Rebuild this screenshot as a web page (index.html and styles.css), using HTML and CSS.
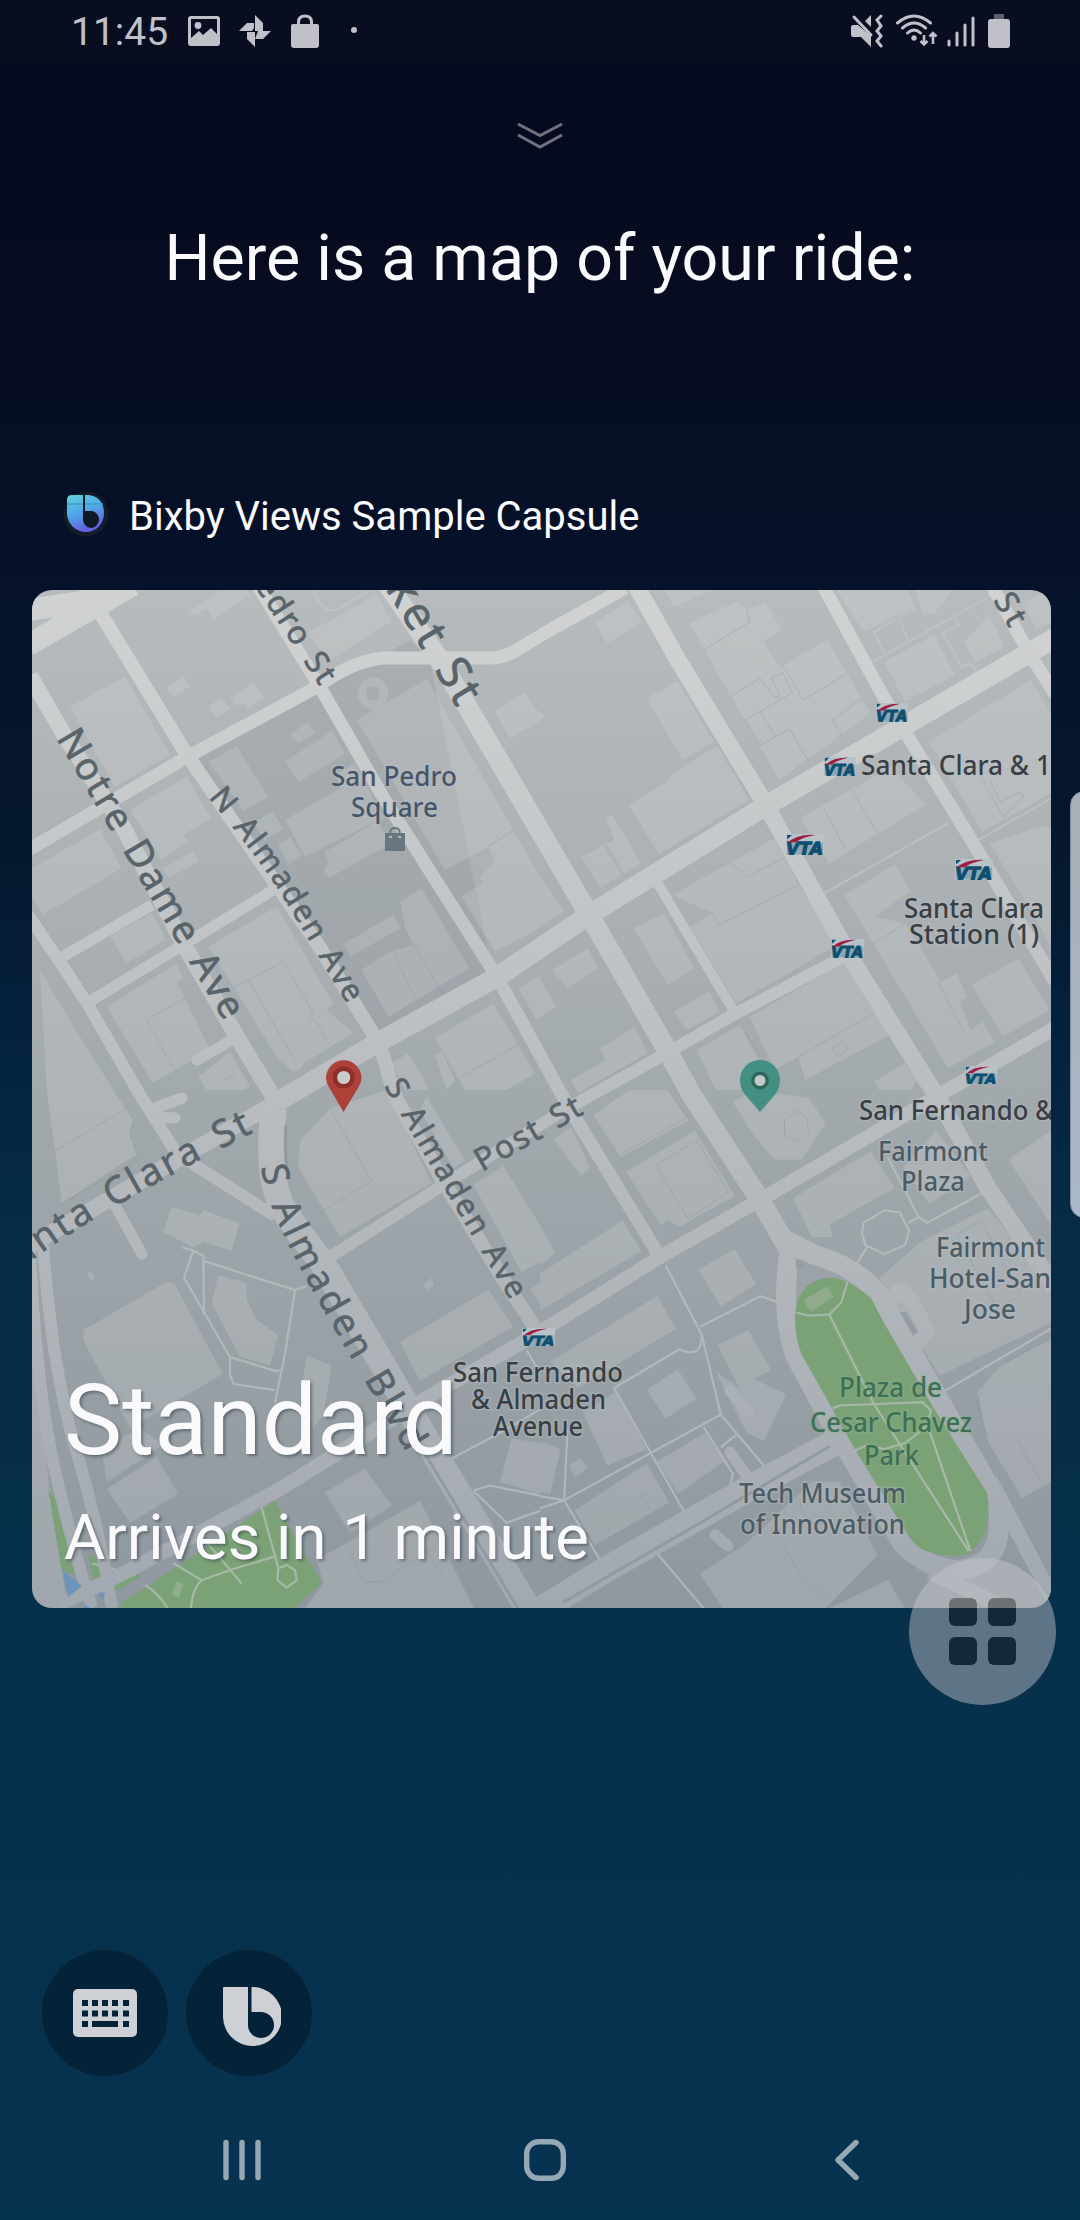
FILE: index.html
```html
<!DOCTYPE html>
<html lang="en">
<head>
<meta charset="utf-8">
<title>Map of your ride</title>
<link rel="stylesheet" href="styles.css">
</head>
<body>
<main class="screen">
  <header class="status">
    <div class="status-left">
      <span class="clock">11:45</span>
      <svg class="ico-image" width="32" height="30" viewBox="0 0 32 30"><path fill-rule="evenodd" d="M3 0H29Q32 0 32 3V27Q32 30 29 30H3Q0 30 0 27V3Q0 0 3 0ZM3 3V22L11 15L15 19L23 12L29 18V3Z"/><circle cx="10" cy="9.5" r="3.4"/></svg>
      <svg class="ico-fan" width="32" height="34" viewBox="0 0 32 34"><path d="M16 1L24 9V17H16ZM32 17L24 25H16L19 17ZM16 33L8 25V18H16ZM0 17L8 9H15V14L13 17Z"/></svg>
      <svg class="ico-bag" width="28" height="34" viewBox="0 0 28 34"><path d="M2 10H26Q28 10 28 12V31Q28 34 25 34H3Q0 34 0 31V12Q0 10 2 10Z"/><path class="line3" d="M7.500 12V8Q7.500 2 14 2Q20.500 2 20.500 8V12"/></svg>
      <span class="dot"></span>
    </div>
    <div class="status-right">
      <svg width="32" height="34" viewBox="0 0 32 34"><path d="M2 11H7L20 22V33L10 23H2Q0 23 0 21V13Q0 11 2 11ZM20 1V13L14 7Z"/><path class="line3" d="M3 3L20 21"/><path class="line3" d="M30 2L26 6L30 12L26 17L30 22L26 27L30 32"/></svg>
      <svg class="ico-wifi" width="42" height="34" viewBox="0 0 42 34"><path class="line3" d="M1.500 9Q18 -5 34.500 9M6.500 14Q18 4 29.500 14M11.500 19Q18 13 24.500 19"/><circle cx="18" cy="24" r="2.700"/><path class="line2" d="M28 21V30M24.500 27L28 30.500L31.500 27M37 30V19M33.500 22.500L37 19L40.500 22.500"/></svg>
      <svg class="ico-signal" width="28" height="34" viewBox="0 0 28 34"><path class="line3" d="M2 27V31M10 19V31M18 11V31M26 4V31"/></svg>
      <svg class="ico-battery" width="22" height="34" viewBox="0 0 22 34"><path opacity=".45" d="M6 0H16V6H6Z"/><rect y="5" width="22" height="29" rx="3"/></svg>
    </div>
  </header>

  <svg class="chevrons" width="48" height="30" viewBox="0 0 48 30"><path d="M2 3L24 14.500L46 3M2 14L24 26L46 14"/></svg>
  <h1 class="title">Here is a map of your ride:</h1>

  <div class="capsule">
    <svg width="46" height="46" viewBox="0 0 46 46">
      <defs><linearGradient id="bx" x1="0" y1="0" x2=".35" y2="1"><stop offset="0" stop-color="#5fd3d6"/><stop offset=".5" stop-color="#4fa9ea"/><stop offset="1" stop-color="#6260dc"/></linearGradient></defs>
      <circle cx="23" cy="23" r="22.500" fill="#141c2a"/>
      <path fill="url(#bx)" d="M9 4H24C35 4 41 12 41 22C41 33 33 41 23 41C13 41 4 33 4 22V9Q4 4 9 4Z"/>
      <path d="M4 13H40" stroke="#3b9fc0" stroke-width="1.500"/>
      <path fill="#101827" d="M20 4H22V20H29A8 8.500 0 1 1 20 28Z"/>
    </svg>
    <span class="capsule-name">Bixby Views Sample Capsule</span>
  </div>

  <section class="card">
    <svg class="map" width="1019" height="1018" viewBox="32 590 1019 1018">
      <defs>
        <linearGradient id="land" gradientUnits="userSpaceOnUse" x1="0" y1="590" x2="0" y2="1608"><stop offset="0" stop-color="#b7bbbd"/><stop offset=".5" stop-color="#a2a9ad"/><stop offset="1" stop-color="#8f989f"/></linearGradient>
        <linearGradient id="road" gradientUnits="userSpaceOnUse" x1="0" y1="590" x2="0" y2="1608"><stop offset="0" stop-color="#d1d3d3"/><stop offset=".5" stop-color="#b9bdc0"/><stop offset="1" stop-color="#a2a8b0"/></linearGradient>
        <symbol id="vta" viewBox="0 0 38 22" preserveAspectRatio="none"><rect width="38" height="22" fill="#b9c2c9"/><path d="M1 1H6L2 5H1Z" fill="#13536f"/><rect x="1" y="9" width="36" height="12.500" fill="#3d7288" opacity=".35"/><text x="0" y="21.500" class="vta-text" textLength="37" lengthAdjust="spacingAndGlyphs">VTA</text><path d="M1 10Q10 0 29 1Q15 4 9 9Q5 8 1 10Z" fill="#9c1f42"/></symbol>
        <path id="p-almaden-n" d="M208 797C240 836 265 868 283 897S335 985 350 1008"/>
        <path id="p-blvd" d="M261 1167C269 1215 300 1270 352 1359S392 1427 410 1458"/>
        <path id="p-clara" d="M22 1268C60 1238 120 1200 258 1130"/>
      </defs>
      <rect x="32" y="590" width="1019" height="1018" fill="url(#land)"/>
      <path class="shade" d="M198 758L317 692L410 640L430 660L492 972L378 1033Z"/>

      <!-- north-west blocks -->
      <g class="bld" transform="translate(30 580) scale(.33333)">
        <path d="M120 380L285 290L420 525L255 620ZM410 325L460 290L482 318L432 352ZM535 380L575 352L600 385L560 415ZM603 355L670 308L703 355L655 385L643 370L620 378ZM478 92L580 30H640L665 42L552 118L532 85L490 105ZM830 160L1040 45L1085 122L900 240Z"/>
        <path d="M300 690L470 590L543 715L460 765L475 785L395 840ZM400 865L490 812L507 842L415 895ZM6 865L210 748L275 865L40 1003L6 950ZM240 1070L365 1000L408 1078L290 1150ZM230 1280L440 1150L460 1195L440 1210L465 1255L540 1410L368 1508Z"/>
        <path d="M535 1100L740 980L910 1270L890 1290L970 1360L820 1450L810 1470L790 1475L740 1430ZM535 545L620 498L715 650L640 690ZM780 465L830 427L855 460L805 490ZM765 545L905 453L945 522L805 605Z"/>
        <path d="M765 720L930 625L920 585L975 550L1060 715L825 830ZM885 815L1040 725L1085 790L900 892L880 870L895 850ZM980 420L1190 297L1530 889V1043L1395 1115L1295 950L1360 910L1350 890L1395 845L1375 800L1245 870Z"/>
        <path fill-rule="evenodd" d="M983 340A46 48 0 1 1 1075 340A46 48 0 1 1 983 340ZM1008 340A21 22 0 1 0 1050 340A21 22 0 1 0 1008 340Z"/>
        <path d="M1110 965L1175 925L1318 1165L1075 1310L995 1170L1070 1120L1130 1100L1150 1095L1125 1040ZM943 1090L1090 1005L1112 1045L960 1130ZM1395 395L1485 337L1520 390L1545 405L1520 430L1440 475ZM1215 1375L1390 1270L1515 1480L1430 1530H1305ZM1465 1225L1525 1190L1530 1197V1312L1520 1320ZM30 1170L150 1370L250 1530H50ZM1085 1450L1135 1420L1200 1530H1125ZM1215 1425L1235 1412L1275 1500L1250 1530ZM505 1490L600 1415L660 1520L640 1530H530ZM670 730L725 695L760 745L705 780ZM745 795L780 770L815 825L775 855Z"/>
        <path class="edge" d="M610 1220L655 1200L760 1145L850 1300L840 1310L865 1335L900 1395M655 1200L800 1450M1090 1115L1155 1255M1150 1090L1235 1235M1375 800L1450 750M1285 1495L1465 1395M580 1500L620 1480M465 1255L350 1320L430 1465"/>
        <path class="walk" d="M845 30L870 70Q890 95 920 90L1020 30"/>
      </g>
      <!-- north-east blocks -->
      <g class="bld" transform="translate(540 580) scale(.34435 .33333)">
        <path d="M158 128L255 65L297 125L195 190ZM310 355L400 303L505 485L415 540ZM258 675L375 600L378 585L515 498L607 660L345 822ZM120 830L185 795L235 885L175 923ZM192 715L210 703L293 850L245 883L192 790L215 780Z"/>
        <path d="M433 130L575 62L600 90L655 68L702 150L648 185L697 260L835 180L960 400L695 600ZM360 30H500L390 80ZM860 30H1065L1090 80L940 155ZM1090 30H1200L1145 100L1115 105ZM1000 245L1145 165L1205 285L1060 365ZM1230 185L1305 105L1350 200L1265 245ZM1400 70L1484 30V130L1440 145Z"/>
        <path d="M1130 485L1425 300L1484 400V640L1285 755ZM755 715L1020 560L1120 675L840 850ZM885 945L1030 853L1075 935L970 1010L1060 1030L1165 1205L1210 1180L1240 1250L1220 1265L1250 1350L1285 1325L1320 1385L1185 1465ZM1305 790L1445 740H1484V1100L1420 980ZM1253 1215L1390 1135L1480 1290L1345 1370Z"/>
        <path d="M385 945L680 775L750 915L870 1090L570 1270L435 1040L500 1000ZM272 1045L360 1000L448 1165L370 1215ZM388 1295L490 1235L523 1295L425 1350ZM35 1170L140 1105L168 1165L80 1225ZM0 889L70 990L0 1043ZM0 1197L48 1280L0 1312ZM610 1310L880 1150L1015 1365L770 1500L750 1430L680 1470ZM455 1410L580 1335L680 1530H510ZM970 1505L1060 1450L1095 1500L1080 1530H985ZM175 1405L275 1340L312 1420L110 1540L90 1500L190 1440Z"/>
        <path class="edge" d="M475 210L610 125L600 90M555 348L640 295L683 355L697 345L672 295L705 278L733 338L597 420L640 495L725 447L780 545M640 398L683 468M705 255L765 360L892 280M932 355L890 390L850 420L882 480M820 680L890 810M905 630L980 760M555 850L605 890L705 835M500 1000L520 1035L750 915M1285 600L1345 710L1405 650L1395 635L1335 665L1305 600M970 1090L1060 1030M1155 1205L1230 1355M595 1355L640 1430M750 1430L970 1300M848 1405L880 1385L895 1410L865 1430Z"/>
        <path class="walk" d="M965 245L1200 110L1320 40M1000 220L970 155L1090 85M1045 120L1068 180M1200 110L1217 135L1170 160L1225 262L1250 250L1268 275M825 940L1185 730M1265 785L1484 655"/>
      </g>
      <!-- south-west blocks -->
      <g class="bld" transform="translate(30 1090) scale(.33333 .33807)">
        <path d="M50 0H250L310 90L300 130L320 190L95 335L75 180ZM400 420L425 345L510 370L520 355L628 395L605 475L520 450L490 465ZM160 710L415 565L435 575L578 840L300 1000L160 740ZM545 630L565 548L648 570L650 620L680 680L745 725L720 815L630 790ZM810 150L900 55L1070 0L1205 275L930 435L805 230Z"/>
        <path d="M1330 280L1420 225L1530 400V508L1475 540ZM1110 745L1375 590L1450 700L1170 860ZM815 885L830 785L905 815L880 960L850 1000ZM230 1180L380 1085L445 1195L300 1280ZM215 1060L330 1000L400 1050L230 1160ZM885 1190L1005 1120L1085 1230L960 1310ZM1410 1160L1445 1030L1530 1045V1195ZM860 1390L1170 1215L1350 1568H800L880 1460ZM1190 20L1305 210L1270 230L1170 60ZM1500 590L1530 570V630ZM170 545L180 535L195 555L182 565ZM1180 575L1205 555L1212 575L1190 592Z"/>
        <path d="M6 470L30 900L60 1200L120 1568H0Z"/>
        <path class="edge" d="M75 180L290 55M95 335L310 215M310 90L300 130L320 190M900 55L1025 270L880 355M960 1370L1005 1455H1050L1220 1350M1170 1330L1240 1440"/>
        <path class="walk" d="M455 465L490 475L520 490V505L795 592L830 580M490 475L462 555L600 790L740 832L755 828M520 505L522 665M795 592L765 780L735 925M600 790V845L612 870L735 888M1265 1090L1400 1020L1530 945M1330 1185L1380 1170L1530 1200M1330 1185L1430 1280L1530 1245M1490 770L1520 820"/>
        <g class="park"><path d="M55 1185L90 1225L105 1280L150 1440L95 1420ZM270 1520L350 1470L560 1330L735 1215L875 1460L750 1568H290ZM175 1370L250 1420L190 1450ZM250 1470L325 1425L332 1440L255 1482Z"/></g>
        <path class="walk" d="M695 1235L745 1415L742 1450L770 1472L800 1450L795 1420L770 1405L745 1415M430 1400L515 1450Q480 1480 482 1568M515 1450L600 1420L740 1378M515 1320L635 1460M345 1465Q390 1490 420 1545M185 1400L260 1420"/>
        <path class="hut" d="M425 1490L440 1452L460 1462L445 1503Z"/>
      </g>
      <!-- south-east blocks -->
      <g class="bld" transform="translate(540 1090) scale(.34435 .40816)">
        <path d="M155 60L260 0H370L430 75L235 165ZM250 200L450 100L565 260L405 335L370 320L350 330ZM40 120L90 90L145 190L120 210ZM0 450L240 320L295 395L0 540ZM0 330L45 400L0 430ZM460 440L565 390L628 475L525 530ZM30 665L340 505L395 585L110 730ZM515 625L605 588L670 685L580 730ZM510 690L580 730L620 708L715 745L650 860L600 840Z"/>
        <path d="M310 735L400 685L455 755L365 805ZM125 790L220 740L310 880L195 920ZM340 910L480 840L535 910L400 990ZM100 1030L310 915L375 1010L160 1115ZM465 1185L600 1110L790 960L870 960L980 1140L830 1270H530ZM840 1270L1010 1200L1060 1270ZM735 265L960 150L1030 240L840 330L850 360L790 360ZM1055 190L1150 100L1250 210L1130 280ZM560 30L620 0L780 20L830 80L760 170L680 170L620 110Z"/>
        <path d="M985 460L1110 370L1300 290L1484 480V570L1160 700ZM1360 170L1484 100V330ZM1270 740L1330 680L1484 610V960L1400 1000L1300 860ZM0 860L60 880L30 990L0 985ZM85 920L115 903L138 925L100 950Z"/>
        <path class="edge" d="M230 160L420 70M335 185L455 125L548 250L430 315ZM710 75L745 50L775 70L780 100L745 125L710 110ZM1210 355L1280 320L1395 500L1330 540ZM1300 855L1270 770Q1280 680 1484 610M1380 850L1455 960M755 1000Q760 1080 850 1060M670 1070L760 1190L830 1240M185 1090L300 990L320 1030"/>
        <path class="walk" d="M365 430L470 600L525 795L650 920M465 580L640 505L690 520M470 600Q470 660 405 635L215 730L430 1050M525 795L320 890L70 1005L0 1025M70 1005L195 1180M0 995L70 1005L80 830M570 845L525 875M475 825L560 940L550 980M340 1135L475 1270M920 425L950 385M940 325L1000 295L1045 300L1072 345L1060 380L1000 402L945 380L935 350ZM1070 325L1100 312M1010 165L1100 312L1125 325L1290 250M1170 740L1484 585"/>
      </g>

      <!-- streets -->
      <g class="streets">
        <path stroke-width="22" d="M28 610L95 600L150 570M28 645L133 585"/>
        <path stroke-width="14" d="M85 588L187 755L278 887L317 943L377 1040Q383 1053 390 1080L397 1100L443 1181L503 1279L540 1335"/>
        <path stroke-width="16" d="M30 676L63 733L123 827L183 943L237 1037L277 1103"/>
        <path stroke-width="13" d="M28 850L187 757L317 687Q350 662 382 658H490Q505 658 520 648L550 630L625 588"/>
        <path stroke-width="13" d="M258 586L320 687L383 797L497 977L568 1106L660 1257"/>
        <path stroke-width="20" d="M386 582L443 665L588 913L667 1050L691 1094L760 1200L796 1262"/>
        <path stroke-width="20" d="M1055 638L1029 653L902 727L767 805L592 913L540 948L497 977L377 1043L277 1102"/>
        <path stroke-width="16" d="M277 1102L180 1158L110 1199L28 1246"/>
        <path stroke-width="17" d="M635 584L678 660L767 807L850 957L939 1100L988 1188L1055 1287"/>
        <path stroke-width="13" d="M822 584L888 705L902 727L967 833L1055 982"/>
        <path stroke-width="13" d="M991 584L1029 653L1055 694"/>
        <path stroke-width="14" d="M1055 1028L939 1095L760 1200L660 1257L540 1332L423 1400L280 1489L130 1570L60 1604"/>
        <path stroke-width="12" d="M847 955L733 1015L667 1053L561 1112L443 1185L330 1257"/>
        <path stroke-width="10" d="M658 884L735 1013"/>
        <path stroke-width="12" d="M28 915L60 962L87 1003L140 1095L177 1154L275 1216"/>
        <path stroke-width="11" d="M57 960L152 905M87 1003L183 945L278 887"/>
        <path stroke-width="26" d="M274 1108Q266 1165 280 1203Q292 1225 322 1262L390 1377L430 1446L532 1615"/>
        <path stroke-width="11" d="M112 1200L142 1254M197 1060L237 1037M155 1108L182 1098M160 1117L175 1118M730 1391L748 1412M715 1535L728 1546M730 1452L748 1478" stroke-linecap="round"/>
        <path stroke-width="12" d="M30 1250Q36 1390 56 1475T92 1608M43 1245Q52 1370 76 1450T112 1608"/>
        <path stroke-width="26" d="M836 1442L753 1486L605 1570L540 1610"/>
        <path stroke-width="20" d="M790 1248Q780 1310 795 1355L833 1426L902 1543Q925 1568 958 1570Q1010 1566 996 1498L946 1412L881 1298Q860 1268 815 1255L785 1240"/>
        <path stroke-width="15" d="M990 1480L1060 1612M930 1572L1010 1610M893 1302Q900 1280 911 1300L927 1330L915 1345"/>
      </g>
      <path class="water" d="M62 1570L82 1586L68 1597ZM98 1594L105 1592L103 1600ZM83 1604L90 1608H84Z"/>
      <path class="median" stroke-width="3" d="M562 1603L700 1523L830 1446M286 1125Q284 1150 288 1180M424 1452L520 1612"/>
      <path fill="#959da4" d="M796 1258L806 1264L796 1270ZM900 1312L906 1312L918 1332L913 1336Z"/>
      <path class="green" d="M797 1302Q806 1279 829 1278Q846 1277 871 1298L884 1323L936 1412L984 1488Q990 1494 988 1519Q988 1536 970 1553Q955 1560 926 1551Q915 1547 908 1535L857 1453L802 1355Q795 1340 795 1315Z"/>
      <g transform="translate(540 1090) scale(.34435 .40816)"><path class="walk" d="M745 545L780 553L840 550L875 520L893 470M840 550L970 770L1245 1130M850 780L870 773L1110 765L1135 785L1125 820L1250 1130M915 883L950 870L1000 880L1060 865L1130 820"/><path fill="#92aa8d" d="M765 515L835 480L852 507L787 543Z"/></g>

      <!-- street names -->
      <g class="street-name">
        <text transform="translate(56 738) rotate(59.300)" font-size="38" textLength="330">Notre Dame Ave</text>
        <text font-size="31"><textPath href="#p-almaden-n" textLength="250">N Almaden Ave</textPath></text>
        <text transform="translate(384 1086) rotate(59.500)" font-size="31" textLength="249">S Almaden Ave</text>
        <text font-size="37"><textPath href="#p-blvd" textLength="322">S Almaden Blvd</textPath></text>
        <text font-size="38"><textPath href="#p-clara" textLength="269">anta Clara St</textPath></text>
        <text transform="translate(482 1172) rotate(-29.700)" font-size="32" textLength="118">Post St</text>
        <text transform="translate(254 585) rotate(57)" font-size="32" textLength="121">edro St</text>
        <text transform="translate(385 588) rotate(59)" font-size="46" textLength="140">ket St</text>
        <text transform="translate(993 600) rotate(60)" font-size="32" textLength="33">St</text>
      </g>

      <!-- places and stations -->
      <g class="place">
        <text x="331" y="786" textLength="126" lengthAdjust="spacingAndGlyphs">San Pedro</text>
        <text x="351" y="817" textLength="87" lengthAdjust="spacingAndGlyphs">Square</text>
        <g class="dim">
          <text x="878" y="1161" textLength="110" lengthAdjust="spacingAndGlyphs">Fairmont</text><text x="901" y="1191" textLength="64" lengthAdjust="spacingAndGlyphs">Plaza</text>
          <text x="936" y="1257" textLength="109" lengthAdjust="spacingAndGlyphs">Fairmont</text><text x="929" y="1288" textLength="122" lengthAdjust="spacingAndGlyphs">Hotel-San</text><text x="964" y="1319" textLength="52" lengthAdjust="spacingAndGlyphs">Jose</text>
          <text x="739" y="1503" textLength="167" lengthAdjust="spacingAndGlyphs">Tech Museum</text><text x="740" y="1534" textLength="165" lengthAdjust="spacingAndGlyphs">of Innovation</text>
        </g>
        <g class="leaf">
          <text x="839" y="1397" textLength="103" lengthAdjust="spacingAndGlyphs">Plaza de</text><text x="810" y="1432" textLength="162" lengthAdjust="spacingAndGlyphs">Cesar Chavez</text><text x="864" y="1465" textLength="55" lengthAdjust="spacingAndGlyphs">Park</text>
        </g>
        <g class="station">
          <text x="861" y="775" textLength="190" lengthAdjust="spacingAndGlyphs">Santa Clara &amp; 1</text>
          <text x="904" y="918" textLength="140" lengthAdjust="spacingAndGlyphs">Santa Clara</text><text x="909" y="944" textLength="130" lengthAdjust="spacingAndGlyphs">Station (1)</text>
          <text x="859" y="1120" textLength="195" lengthAdjust="spacingAndGlyphs">San Fernando &amp;</text>
          <text x="453" y="1382" textLength="170" lengthAdjust="spacingAndGlyphs">San Fernando</text><text x="471" y="1409" textLength="135" lengthAdjust="spacingAndGlyphs">&amp; Almaden</text><text x="493" y="1436" textLength="90" lengthAdjust="spacingAndGlyphs">Avenue</text>
        </g>
      </g>
      <path fill="#687680" d="M385 833H405V851H385Z"/><path d="M390 834Q390 828 395 828T400 834" fill="none" stroke="#687680" stroke-width="1.800"/><path fill="#b4babd" d="M389 836H392V838H389ZM398 836H401V838H398Z"/>

      <use href="#vta" x="876" y="703" width="32" height="19"/>
      <use href="#vta" x="824" y="757" width="32" height="19"/>
      <use href="#vta" x="786" y="834" width="38" height="21"/>
      <use href="#vta" x="955" y="859" width="38" height="21"/>
      <use href="#vta" x="831" y="939" width="33" height="19"/>
      <use href="#vta" x="965" y="1066" width="32" height="18"/>
      <use href="#vta" x="522" y="1328" width="33" height="18"/>

      <path fill="#ad4138" d="M343.500 1112L329.500 1088Q326 1083 326 1078A17.700 17.700 0 0 1 361.500 1078Q361.500 1083 358 1088Z"/>
      <circle cx="343.700" cy="1077.500" r="8.800" fill="#c9cccd" stroke="#8e2f2b" stroke-width="4.500"/>
      <path fill="#439083" d="M760 1112L744.500 1094Q740 1088 740 1080A20 20 0 0 1 780 1080Q780 1088 775.500 1094Z"/>
      <circle cx="760" cy="1080.500" r="7.200" fill="#c3c8c8" stroke="#2c665c" stroke-width="3.400"/>
    </svg>
    <div class="caption">
      <p class="ride-type">Standard</p>
      <p class="ride-eta">Arrives in 1 minute</p>
    </div>
  </section>

  <div class="actions">
    <span class="round">
      <svg width="64" height="48" viewBox="0 0 64 48"><rect width="64" height="48" rx="5" fill="#cdd1d5"/><path fill="#042338" d="M9 11h6v6h-6zM19 11h6v6h-6zM29 11h6v6h-6zM39 11h6v6h-6zM50 11h6v6h-6zM9 21.500h6v6h-6zM19 21.500h6v6h-6zM29 21.500h6v6h-6zM39 21.500h6v6h-6zM50 21.500h6v6h-6zM9 32h6v6h-6zM19 32h26v6h-26zM50 32h6v6h-6z"/></svg>
    </span>
    <span class="round bixby">
      <svg width="58" height="60" viewBox="0 0 58 60"><path fill="#cdd1d5" d="M1 1H25V39A13 13 0 1 0 38 26H28.500V1A29.500 29.500 0 1 1 0 31V2Q0 1 1 1Z"/></svg>
    </span>
  </div>

  <nav class="nav">
    <svg width="38" height="42" viewBox="0 0 38 42"><path d="M3 3.500V38.500M19 3.500V38.500M35 3.500V38.500"/></svg>
    <svg class="home" width="42" height="42" viewBox="0 0 42 42"><rect x="2.700" y="2.700" width="36.600" height="36.600" rx="12"/></svg>
    <svg width="26" height="42" viewBox="0 0 26 42"><path d="M22 3.500L4 21L22 38.500"/></svg>
  </nav>

  <div class="edge-handle"></div>
  <div class="float-button">
    <svg width="67" height="67" viewBox="0 0 67 67">
      <defs><linearGradient id="fb" gradientUnits="userSpaceOnUse" x1="0" y1="0" x2="0" y2="67"><stop offset=".15" stop-color="#6f7274"/><stop offset=".15" stop-color="#13293b"/></linearGradient></defs>
      <g fill="url(#fb)"><rect width="28" height="28" rx="6"/><rect x="39" width="28" height="28" rx="6"/><rect y="39" width="28" height="28" rx="6"/><rect x="39" y="39" width="28" height="28" rx="6"/></g>
    </svg>
  </div>
</main>
</body>
</html>
```
FILE: styles.css
```css
* { box-sizing: border-box; }
body { margin: 0; font-family: Roboto, sans-serif; color: #fafafc; }
h1, p { margin: 0; font-weight: 400; }
svg { display: block; flex: none; }

.screen {
  position: relative;
  display: flex;
  flex-direction: column;
  width: 1080px;
  height: 2220px;
  overflow: hidden;
  background: linear-gradient(#050a1e 0, #050a1e 120px, #070c20 300px, #05122a 580px, #05182f 860px, #04213c 1020px, #052b46 1220px, #06304b 1620px, #063350 2220px);
}

.status {
  display: flex;
  justify-content: space-between;
  height: 63px;
  padding: 14px 70px 0 71px;
  background: #080d20;
  color: #c0c1c8;
}
.status svg { fill: #c0c1c8; }
.status .line3 { fill: none; stroke: #c0c1c8; stroke-width: 3; stroke-linecap: round; }
.status .line2 { fill: none; stroke: #c0c1c8; stroke-width: 2.6; }
.status-left, .status-right { display: flex; align-items: flex-start; }
.clock { width: 117px; font-size: 39px; line-height: 36px; white-space: nowrap; }
.ico-image { margin-top: 2px; }
.ico-fan { margin-left: 19px; }
.ico-bag { margin-left: 20px; }
.dot { width: 6px; height: 6px; margin: 13px 0 0 32px; border-radius: 50%; background: #c0c1c8; }
.ico-wifi { margin-left: 13px; }
.ico-signal { margin-left: 9px; }
.ico-battery { margin-left: 13px; }

.chevrons { align-self: center; margin-top: 58px; fill: none; stroke: #70737d; stroke-width: 3; }
.title { margin-top: 69px; font-size: 64.5px; line-height: 76px; text-align: center; white-space: nowrap; }

.capsule { display: flex; align-items: center; gap: 20px; height: 50px; margin: 196px 0 0 63px; }
.capsule svg { margin-bottom: 6px; }
.capsule-name { font-size: 40px; line-height: 50px; white-space: nowrap; }

.card {
  display: grid;
  width: 1019px;
  height: 1018px;
  margin: 48px 0 0 32px;
  border-radius: 20px;
  overflow: hidden;
}
.map, .caption { grid-area: 1 / 1; }
.caption { align-self: end; padding: 0 0 33px 32px; text-shadow: 2px 2px 3px rgba(50, 60, 70, .5); white-space: nowrap; z-index: 1; }
.ride-type { font-size: 98px; line-height: 100px; }
.ride-eta { margin-top: 28px; font-size: 63.4px; line-height: 76px; }

.shade { fill: #8f969d; opacity: .3; }
.bld path { fill: #dfe2df; fill-opacity: .2; }
.bld .edge { fill: none; stroke: #7c868d; stroke-opacity: .28; stroke-width: 1; vector-effect: non-scaling-stroke; }
.bld .walk, .walk { fill: none; stroke: #c3c7c8; stroke-opacity: .6; stroke-width: 2.2; vector-effect: non-scaling-stroke; }
.bld .park path, .green { fill: #7ba276; fill-opacity: 1; }
.water { fill: #6c94bd; }
.streets { fill: none; stroke: url(#road); stroke-linejoin: round; }
.median { fill: none; stroke: #929aa1; }
.street-name, .place { font-family: "Noto Sans", sans-serif; }
.street-name { fill: #59636a; stroke: #59636a; stroke-width: .6px; word-spacing: .22em; }
.place { font-size: 26.5px; fill: #46566a; paint-order: stroke; stroke: #b9bfc3; stroke-opacity: .4; stroke-width: 3px; font-weight: 500; }
.dim { fill: #4b5c67; }
.leaf { fill: #3d7057; stroke: #8db088; }
.station { fill: #383f44; }
.vta-text { font: italic 700 19px "Liberation Sans", sans-serif; fill: #0e4f6f; stroke: #0e4f6f; stroke-width: 1.4px; }

.actions { display: flex; gap: 18px; margin: 342px 0 0 42px; }
.round { display: flex; align-items: center; justify-content: center; width: 126px; height: 126px; border-radius: 50%; background: #042338; }
.bixby { padding: 6px 0 0 6px; }

.nav { display: flex; justify-content: space-between; margin: 63px 220px 0 223px; }
.nav svg { fill: none; stroke: #96a8b5; stroke-width: 5.4; stroke-linecap: round; stroke-linejoin: round; }
.nav .home { margin-right: 6px; }

.edge-handle {
  position: absolute;
  top: 791px;
  right: -20px;
  width: 30px;
  height: 427px;
  border: 1px solid #7f8d9c;
  border-radius: 14px;
  background: linear-gradient(#a9afb6, #a9b8c7);
}
.float-button {
  position: absolute;
  top: 1558px;
  left: 909px;
  display: flex;
  align-items: center;
  justify-content: center;
  width: 147px;
  height: 147px;
  border-radius: 50%;
  background: rgba(200, 202, 207, .45);
}
```
